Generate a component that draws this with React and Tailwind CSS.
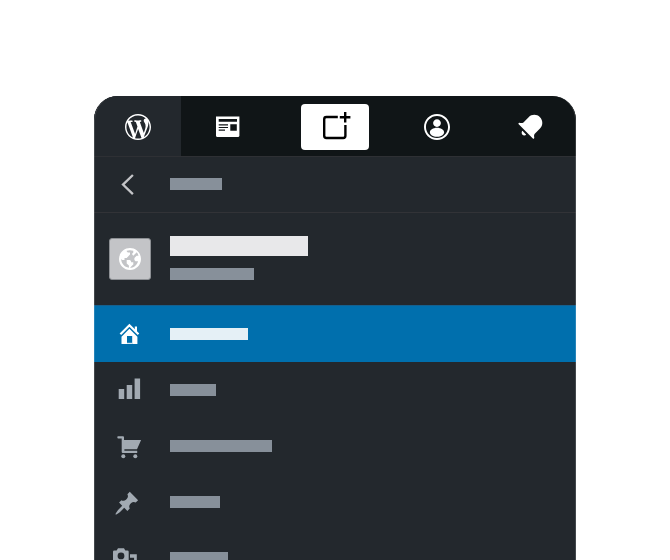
function Cell({ children, box, className }) {
  return (
    <svg viewBox={box} className={`shrink-0 ${className}`} aria-hidden="true">
      {children}
    </svg>
  );
}

function WordPressLogo() {
  return (
    <Cell box="0 0 20 20" className="size-[26px]">
      <path
        fill="#fff"
        d="M20 10c0-5.51-4.49-10-10-10C4.48 0 0 4.49 0 10c0 5.52 4.48 10 10 10 5.51 0 10-4.48 10-10zM7.78 15.37L4.37 6.22c.55-.02 1.17-.08 1.17-.08.5-.06.44-1.13-.06-1.11 0 0-1.45.11-2.37.11-.18 0-.37 0-.58-.01C4.12 2.69 6.87 1.11 10 1.11c2.33 0 4.45.87 6.05 2.34-.68-.11-1.65.39-1.65 1.58 0 .74.45 1.36.9 2.1.35.61.55 1.36.55 2.46 0 1.49-1.4 5-1.4 5l-3.03-8.37c.54-.02.82-.17.82-.17.5-.05.44-1.25-.06-1.22 0 0-1.44.12-2.38.12-.87 0-2.33-.12-2.33-.12-.5-.03-.56 1.2-.06 1.22l.92.08 1.26 3.41zM17.41 10c.24-.64.74-1.87.43-4.25.7 1.29 1.05 2.71 1.05 4.25 0 3.29-1.73 6.24-4.4 7.78.97-2.59 1.94-5.2 2.92-7.78zM6.1 18.09C3.12 16.65 1.11 13.53 1.11 10c0-1.3.23-2.48.72-3.59C3.25 10.3 4.67 14.2 6.1 18.09zm4.03-6.63l2.58 6.98c-.86.29-1.76.45-2.71.45-.79 0-1.57-.11-2.29-.33.81-2.38 1.62-4.74 2.42-7.1z"
      />
    </Cell>
  );
}

function ReaderIcon() {
  return (
    <Cell box="0 0 24 22" className="h-[22px] w-6">
      <path d="M0 .5H23.400V19.500Q23.400 21 21.900 21H1.500Q0 21 0 19.500Z" fill="#fff" />
      <path d="M2.700 3H21v2.700H2.700zM14.300 8.300h6.500v6.500h-6.500z" fill="#101517" />
      <path d="M2.700 8.200H12v1.200H2.700zM2.700 11H12v1.100H2.700zM2.700 13.400H9v1.400H2.700z" fill="#101517" />
    </Cell>
  );
}

function WriteIcon() {
  return (
    <Cell box="322 111 30 30" className="size-[30px]">
      <g fill="none" stroke="#000" strokeWidth="2.4">
        <path d="M337.800 117H326.400Q324.200 117 324.200 119.200V135.800Q324.200 138 326.400 138H343.200Q345.400 138 345.400 135.800V125" />
        <path d="M345.200 112V122.600M339.800 117.200H350.400" />
      </g>
    </Cell>
  );
}

function UserIcon() {
  return (
    <Cell box="2 2 20 20" className="size-[26px]">
      <path
        fill="#fff"
        d="M12 2C6.477 2 2 6.477 2 12s4.477 10 10 10 10-4.477 10-10S17.523 2 12 2zm0 18.500c-4.694 0-8.500-3.806-8.500-8.500S7.306 3.500 12 3.500s8.500 3.806 8.500 8.500-3.806 8.500-8.500 8.500zm0-8c-3.038 0-5.500 1.728-5.500 3.500s2.462 3.500 5.500 3.500 5.500-1.728 5.500-3.500-2.462-3.500-5.500-3.500zm0-.5c1.660 0 3-1.340 3-3s-1.340-3-3-3-3 1.340-3 3 1.340 3 3 3z"
      />
    </Cell>
  );
}

function BellIcon() {
  return (
    <Cell box="514 111 32 32" className="size-8">
      <path
        transform="translate(514.200 110.800) scale(1.340)"
        fill="#fff"
        d="M6.140 14.970l2.828 2.827c-.362.362-.862.586-1.414.586-1.105 0-2-.895-2-2 0-.552.224-1.052.586-1.414zm8.867 5.324L14.300 21 3 9.700l.706-.707 1.102.157c.754.108 1.690-.122 2.077-.510l3.885-3.884c2.340-2.340 6.135-2.340 8.475 0s2.340 6.135 0 8.475l-3.885 3.886c-.388.388-.618 1.323-.510 2.077l.157 1.100z"
      />
    </Cell>
  );
}

function GlobeIcon() {
  return (
    <Cell box="2 2 20 20" className="size-[22px]">
      <path
        fill="#fff"
        d="M12 2C6.480 2 2 6.480 2 12s4.480 10 10 10 10-4.480 10-10S17.520 2 12 2zm0 18l2-2 1-1v-2h-2v-1l-1-1H9v3l2 2v1.930c-3.940-.494-7-3.858-7-7.930l1 1h2v-2h2l3-3V6h-2L9 5v-.410C9.927 4.210 10.940 4 12 4s2.073.212 3 .590V6l-1 1v1l1 1 3.130-3.130c.752.897 1.304 1.964 1.606 3.130H18l-2 2v2l1 1h2l.286.286C18.030 18.060 15.240 20 12 20z"
      />
    </Cell>
  );
}

function HomeIcon() {
  return (
    <Cell box="94 306 76 56" className="h-14 w-[76px]">
      <path d="M120.400 334.300 129.400 325.300 138.500 334.300" fill="none" stroke="#fff" strokeWidth="2.200" />
      <path d="M134.800 326.500h2.200v6.200l-2.200-2.200z" fill="#fff" />
      <path d="M129.400 328.700 137.400 336.700V344H132.200V336H127V344H121.500V336.700Z" fill="#fff" />
      <path d="M127 342.800h5.200v1.200h-5.200z" fill="#d9eaf3" />
    </Cell>
  );
}

function StatsIcon() {
  return (
    <Cell box="94 362 76 56" className="h-14 w-[76px]">
      <path d="M118.700 389h5.500v10h-5.500zM126.700 385h5.500v14h-5.500zM134.600 378.500h5.500v20.500h-5.500z" fill="#a2aab2" />
    </Cell>
  );
}

function CartIcon() {
  return (
    <Cell box="94 418 76 56" className="h-14 w-[76px]">
      <path
        d="M118 436.200H123Q124 436.200 124 437.200V440.100H141.100L137 449.200H124.400V450.800H137.200V453H122.800Q121.700 453 121.700 451.900V438.400H118Q117.300 438.400 117.300 437.300T118 436.200Z"
        fill="#a2aab2"
      />
      <circle cx="123.300" cy="456.300" r="2" fill="#a2aab2" />
      <circle cx="135.300" cy="456.300" r="2" fill="#a2aab2" />
    </Cell>
  );
}

function PinIcon() {
  return (
    <Cell box="94 474 76 56" className="h-14 w-[76px]">
      <path
        transform="translate(113.700 490.300) scale(1.310)"
        d="M10.44 3.02l1.82-1.82 6.36 6.35-1.83 1.82c-1.05-.68-2.48-.57-3.41.36l-.75.75c-.92.93-1.04 2.35-.35 3.41l-1.83 1.82-2.41-2.41-2.8 2.79c-.42.42-3.38 2.71-3.8 2.29s1.86-3.39 2.28-3.81l2.79-2.79L4.1 9.36l1.83-1.82c1.05.69 2.48.57 3.4-.36l.75-.75c.93-.92 1.05-2.35.36-3.41z"
        fill="#a2aab2"
      />
    </Cell>
  );
}

function MediaIcon() {
  return (
    <Cell box="94 530 76 56" className="h-14 w-[76px]">
      <path
        fillRule="evenodd"
        d="M116.600 550.500 118 548.200H124L125.300 550.500H127.400Q128.700 550.500 128.700 551.800V564H113V551.800Q113 550.500 114.300 550.500ZM121 552.500a3.400 3.400 0 1 0 0 6.800a3.400 3.400 0 1 0 0-6.800Z"
        fill="#a2aab2"
      />
      <path d="M130 554.200h6.800v10h-2.700v-6.500H130z" fill="#a2aab2" />
    </Cell>
  );
}

function MenuRow({ icon, bar, active }) {
  return (
    <div className={`flex h-14 shrink-0 items-center ${active ? 'bg-[#006fad]' : ''}`}>
      {icon}
      <div className={`h-3 ${bar} ${active ? 'bg-[#e5f0f6]' : 'bg-[#87909a]'}`} />
    </div>
  );
}

export default function App() {
  return (
    <div className="h-[560px] w-[670px] overflow-hidden bg-white pt-24 pl-[94px]">
      <div className="relative flex h-[464px] w-[482px] flex-col overflow-hidden rounded-t-[24px] bg-[#23282d]">
        <header className="flex h-[61px] shrink-0 border-b border-[#2e3034] bg-[#101517]">
          <div className="flex w-[87px] items-center bg-[#23282d] pt-0.5 pl-[31px]">
            <WordPressLogo />
          </div>
          <div className="flex w-[93px] justify-center pt-5">
            <ReaderIcon />
          </div>
          <div className="flex w-[122px] justify-center pt-2">
            <div className="flex h-[46px] w-[68px] rounded bg-white pt-[7px] pl-[21px]">
              <WriteIcon />
            </div>
          </div>
          <div className="flex w-[82px] justify-center pt-[18px]">
            <UserIcon />
          </div>
          <div className="flex flex-1 pt-[15px] pl-9">
            <BellIcon />
          </div>
        </header>
        <div className="flex h-14 shrink-0 items-start border-b border-[#323337]">
          <Cell box="94 157 76 55" className="h-[55px] w-[76px]">
            <path d="M132.900 175 123 184.600 132.900 194.200" fill="none" stroke="#c3c4c7" strokeWidth="2.300" />
          </Cell>
          <div className="mt-[21px] h-3 w-[52px] bg-[#87909a]" />
        </div>
        <div className="flex h-[93px] shrink-0 pt-[23px] pl-[15px]">
          <div className="mt-0.5 flex size-[42px] items-center justify-center rounded-[3px] border border-[#8d9094] bg-[#c3c4c7]">
            <GlobeIcon />
          </div>
          <div className="ml-[19px] flex flex-col gap-3">
            <div className="h-5 w-[138px] bg-[#e8e8ea]" />
            <div className="h-3 w-[84px] bg-[#87909a]" />
          </div>
        </div>
        <div className="-mt-px h-px shrink-0 bg-[#15608e]" />
        <MenuRow icon={<HomeIcon />} bar="w-[78px]" active />
        <MenuRow icon={<StatsIcon />} bar="w-[46px]" />
        <MenuRow icon={<CartIcon />} bar="w-[102px]" />
        <MenuRow icon={<PinIcon />} bar="w-[50px]" />
        <MenuRow icon={<MediaIcon />} bar="w-[58px]" />
        <div className="pointer-events-none absolute inset-0 rounded-t-[24px] border-x border-white/15" />
      </div>
    </div>
  );
}
